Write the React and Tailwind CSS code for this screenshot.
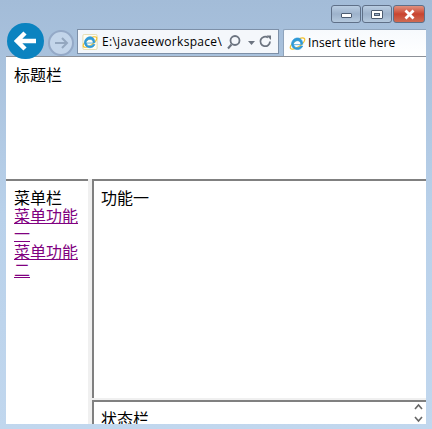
import React from "react";

const cjk = { fontFamily: '"Noto Sans CJK SC", sans-serif' };
const latin = { fontFamily: '"Open Sans", sans-serif' };

function IeLogo({ size = 18, page = false }) {
  return (
    <svg width={size} height={size} viewBox="0 0 18 18" className="shrink-0">
      {page && <rect x="1" y="0.500" width="16" height="17" rx="1.500" fill="#fffdf2" stroke="#e3d9a8" />}
      <ellipse cx="9" cy="9" rx="9" ry="3.600" transform="rotate(-35 9 9)" fill="none" stroke="#f2c230" strokeWidth="1.300" />
      <path d="M3 10.200h9.600c0-2.600-1.400-4.200-3.600-4.200-2.500 0-4.200 1.700-4.600 4.200M5 10.200c.2 2 1.800 3.300 3.800 3.300 1.500 0 2.800-.6 3.500-1.800h2.200c-.9 2.400-3 3.700-5.700 3.700-3.400 0-6-2.400-6-5.800 0-3.600 2.700-6.400 6.200-6.400 3.300 0 5.500 2.400 5.500 6.800"
        fill="#2f9ad8" stroke="#2f9ad8" strokeWidth="0.800" />
    </svg>
  );
}

function CaptionButton({ children, className }) {
  return (
    <div className={`h-[18px] flex items-center justify-center border border-[#5f7088] rounded-[3px] ${className}`}>
      {children}
    </div>
  );
}

export default function App() {
  return (
    <div className="w-[432px] h-[429px] overflow-hidden flex flex-col bg-gradient-to-b from-[#a3bcd8] via-[#b9d1ea] to-[#c1d7ee]">
      <header className="h-[57px] shrink-0 flex flex-col">
        <div className="h-[24px] pt-[5px] pr-[7px] flex justify-end shrink-0">
          <div className="flex gap-[1px]">
            <CaptionButton className="w-[30px] bg-gradient-to-b from-[#b9cde2] via-[#9db2cb] to-[#b5c9de]">
              <div className="mt-[3px] w-[11px] h-[5px] bg-white border border-[#4b5b70] rounded-[1px]" />
            </CaptionButton>
            <CaptionButton className="w-[30px] bg-gradient-to-b from-[#b9cde2] via-[#9db2cb] to-[#b5c9de]">
              <div className="w-[12px] h-[9px] bg-white border border-[#4b5b70] flex items-center justify-center rounded-[1px]">
                <div className="w-[6px] h-[3px] bg-[#9db2cb] border border-[#4b5b70]" />
              </div>
            </CaptionButton>
            <CaptionButton className="w-[32px] bg-gradient-to-b from-[#e0907e] via-[#c9432f] to-[#cf6a52]">
              <svg width="13" height="11" viewBox="0 0 13 11">
                <path d="M2.500 1.500l8 8M10.500 1.500l-8 8" stroke="#fff" strokeWidth="2.800" />
              </svg>
            </CaptionButton>
          </div>
        </div>
        <div className="flex-1 flex items-start pl-[7px] min-h-0">
          <div className="relative z-10 w-[37px] h-[36px] -mt-[1px] rounded-full bg-[#0b83c0] flex items-center justify-center shrink-0">
            <svg width="24" height="22" viewBox="0 0 24 22">
              <path d="M11 3l-8 8 8 8M3.500 11H22" fill="none" stroke="#fff" strokeWidth="4.500" />
            </svg>
          </div>
          <div className="mt-[6px] ml-[4px] w-[26px] h-[26px] rounded-full border-2 border-[#94a9c7] bg-[#c3d5ea] flex items-center justify-center shrink-0">
            <svg width="16" height="14" viewBox="0 0 16 14">
              <path d="M9 2l5 5-5 5M14 7H2" fill="none" stroke="#94a7bf" strokeWidth="2" />
            </svg>
          </div>
          <div className="mt-[5px] ml-[3px] w-[202px] h-[25px] shrink-0 border border-[#7d90a8] bg-[#f4f7fb] flex items-center pl-[4px] overflow-hidden">
            <IeLogo size={16} page />
            <span className="ml-[4px] w-[120px] shrink-0 overflow-hidden whitespace-nowrap text-[12px] tracking-[0.3px] text-black" style={latin}>E:\javaeeworkspace\</span>
            <svg width="54" height="16" viewBox="0 0 54 16" className="shrink-0">
              <circle cx="13" cy="6.500" r="4.500" fill="none" stroke="#6c7480" strokeWidth="1.800" />
              <path d="M9.500 10.500l-3.500 4" stroke="#6c7480" strokeWidth="2" />
              <path d="M26 7h7l-3.500 4z" fill="#6c7480" />
              <path d="M46 3.500a4.800 4.800 0 1 0 2 4" fill="none" stroke="#6c7480" strokeWidth="1.800" />
              <path d="M44.500 1.500h4.500v4.500z" fill="#6c7480" />
            </svg>
          </div>
          <div className="mt-[5px] ml-[4px] flex-1 mr-[6px] h-[27px] border-l border-t border-[#8fa4bc] bg-gradient-to-b from-[#f7fafd] to-white flex items-center pl-[5px] gap-[2px] rounded-tl-[2px]">
            <IeLogo size={17} />
            <span className="text-[12px] tracking-[0.1px] text-black whitespace-nowrap" style={latin}>Insert title here</span>
          </div>
        </div>
        <div className="h-px shrink-0 mx-[6px] bg-[#8d9198]" />
      </header>

      <main className="h-[367px] shrink-0 ml-[6px] w-[420px] flex flex-col bg-white text-[16px] text-black leading-[18px]" style={cjk}>
        <section className="h-[122px] shrink-0 pl-[8px] pt-[8px]">标题栏</section>
        <div className="flex-1 flex min-h-0 bg-[#f0f0f0]">
          <nav className="w-[82px] shrink-0 pl-[8px] pt-[7px] pr-[6px] bg-white border-t-2 border-[#808080]">
            <div>菜单栏</div>
            <a href="#" className="text-[#800080] underline break-all block">菜单功能一</a>
            <a href="#" className="text-[#800080] underline break-all block">菜单功能二</a>
          </nav>
          <div className="ml-[4px] flex-1 flex flex-col gap-[2px] min-w-0">
            <div className="h-[219px] shrink-0 pl-[7px] pt-[7px] bg-white border-t-2 border-l-2 border-[#808080]">功能一</div>
            <div className="flex-1 flex min-h-0 overflow-hidden bg-white border-t-2 border-l-2 border-[#808080]">
              <div className="flex-1 pl-[7px] pt-[7px]">状态栏</div>
              <div className="w-[15px] flex flex-col items-center">
                <svg width="11" height="22" viewBox="0 0 11 22">
                  <path d="M2 7l3.500-4 3.500 4M2 15l3.500 4 3.500-4" fill="none" stroke="#666" strokeWidth="1.600" />
                </svg>
              </div>
            </div>
          </div>
        </div>
      </main>
    </div>
  );
}
